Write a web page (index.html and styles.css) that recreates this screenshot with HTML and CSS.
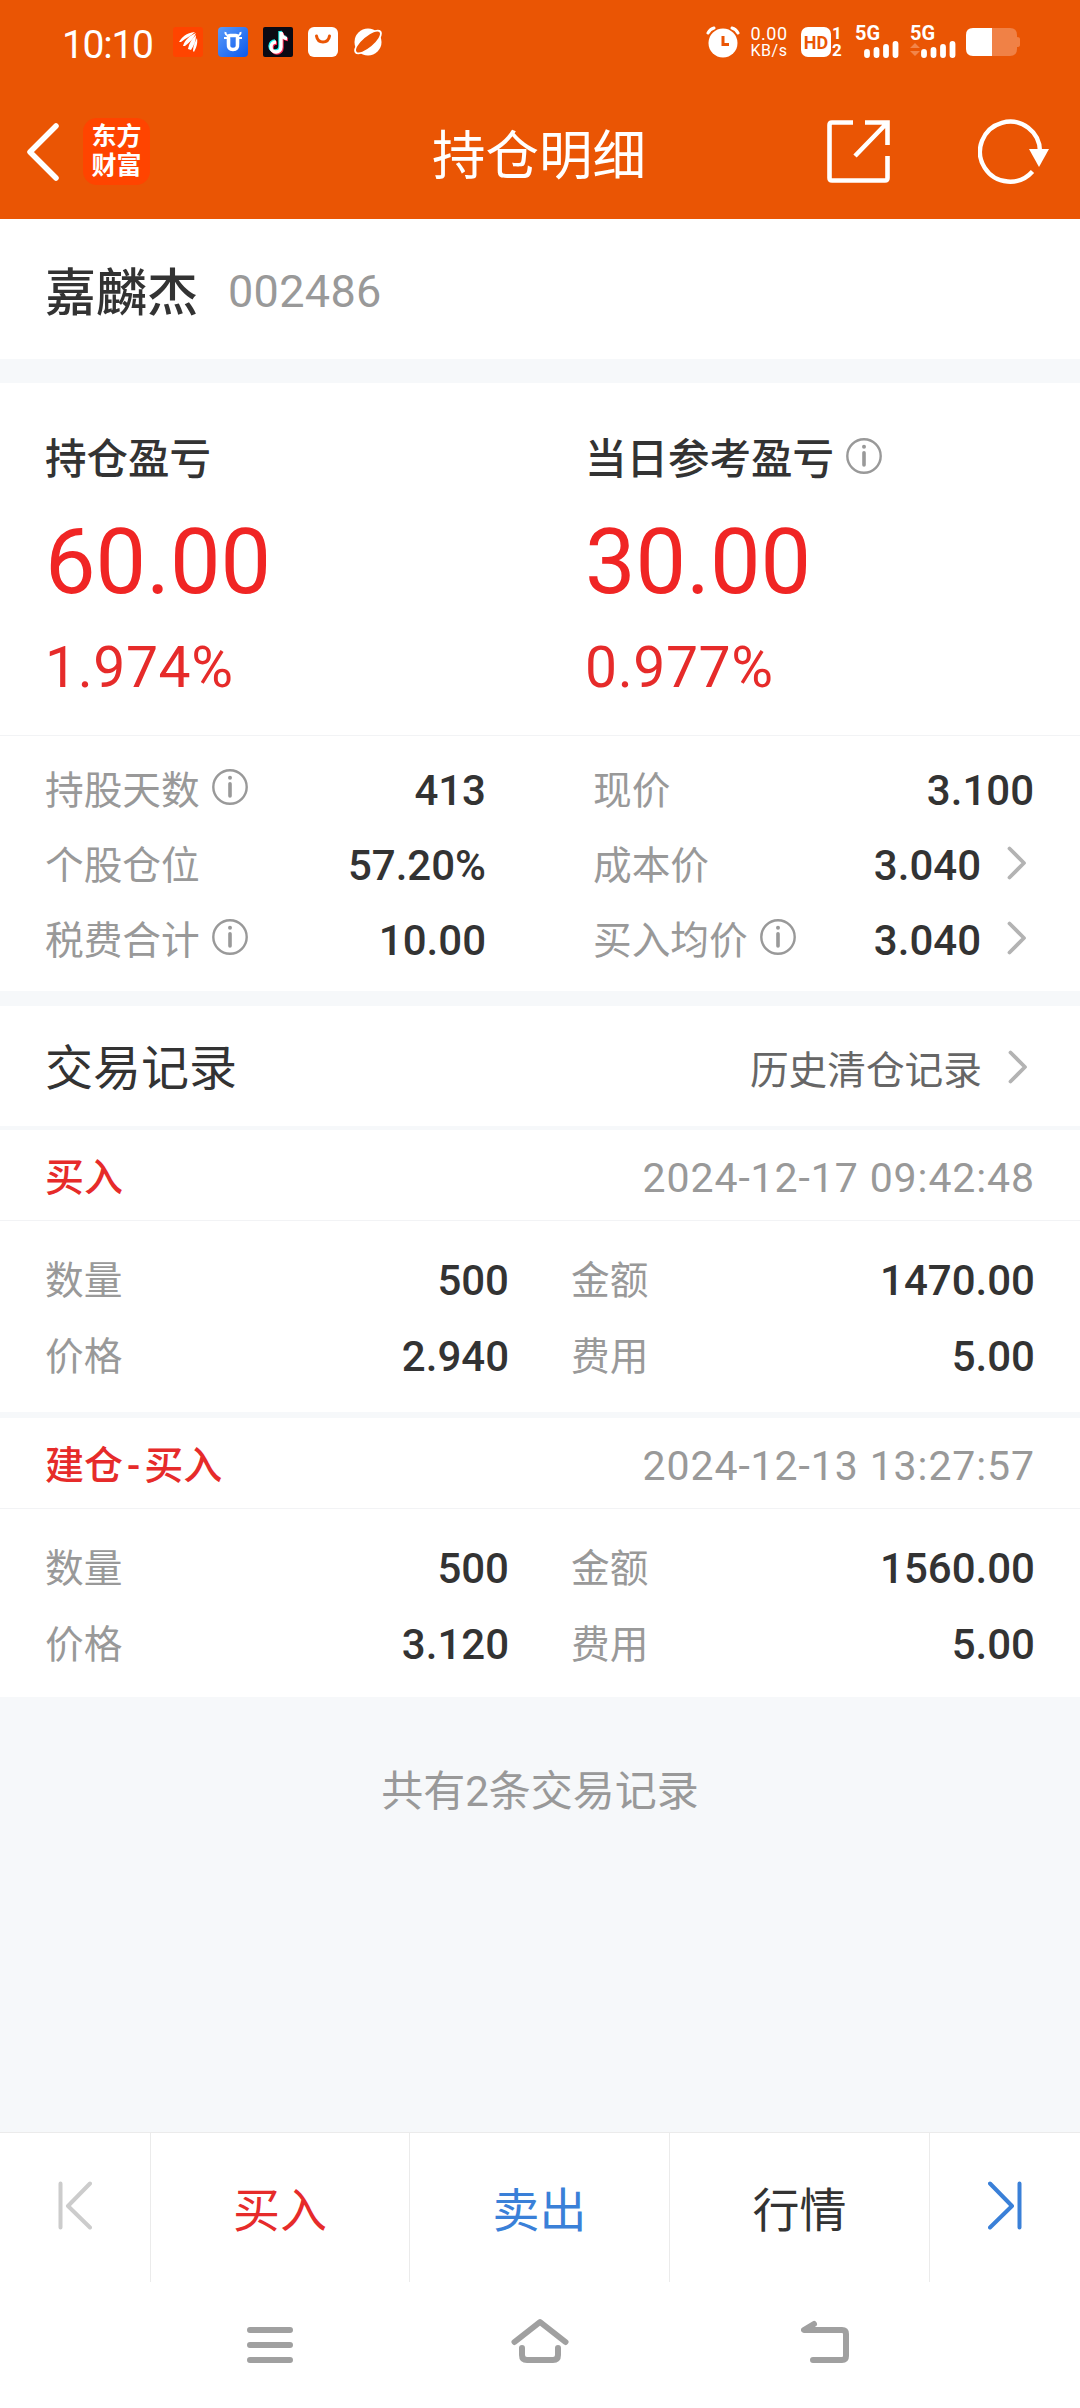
FILE: index.html
```html
<!DOCTYPE html>
<html lang="zh-CN">

<head>
    <title>持仓明细</title>
    <meta charset="utf-8">
    <meta name="viewport" content="width=device-width, initial-scale=1.0">
    <link rel="stylesheet" href="styles.css">
</head>

<body>
    <!-- shared icons -->
    <svg class="sprite">
        <symbol id="info" viewBox="0 0 36 36">
            <circle cx="18" cy="18" r="16.7" fill="none" stroke="#999" stroke-width="2.4" />
            <circle cx="18" cy="8.8" r="2" fill="#999" />
            <path d="M18 14.8V27" stroke="#999" stroke-width="3.6" stroke-linecap="round" />
        </symbol>
        <symbol id="arrow" viewBox="0 0 20 34">
            <path d="M2.5 2.5L17 17L2.5 31.5" fill="none" stroke="#b3b3b3" stroke-width="3.8" stroke-linecap="round" stroke-linejoin="round" />
        </symbol>
    </svg>

    <header>
        <div class="status">
            <span class="clock">10:10</span>
            <div class="apps">
                <svg width="30" height="30" viewBox="0 0 30 30">
                    <rect width="30" height="30" rx="3" fill="#ff4400" />
                    <path d="M6 15C9 10 13 6 22 5C18 9 13 11 8 15ZM10 19C12 13 16 9 23 6C21 11 17 15 12 19ZM15 22C16 16 19 12 23 8C23 14 21 18 18 23ZM20 24C20 19 22 15 24 11C25 17 23 21 21 25Z" fill="#fff" />
                </svg>
                <svg width="30" height="30" viewBox="0 0 30 30">
                    <defs>
                        <linearGradient id="blue" x1="0" y1="0" x2="1" y2="1">
                            <stop offset="0" stop-color="#5a9bf9" />
                            <stop offset="1" stop-color="#0a58ee" />
                        </linearGradient>
                    </defs>
                    <rect width="30" height="30" rx="4" fill="url(#blue)" />
                    <path d="M12 8.500H18Q20 8.500 19.500 12V17Q20 22.500 15 22.500T10.500 17V12Q10 8.500 12 8.500Z" fill="none" stroke="#fff" stroke-width="3.600" />
                    <path d="M7.500 5Q7 8 11 9M22.500 5Q23 8 19 9M6 11H10M20 11H24" fill="none" stroke="#fff" stroke-width="2" />
                </svg>
                <svg width="30" height="30" viewBox="0 0 30 30">
                    <rect width="30" height="30" rx="2" fill="#0b0a14" />
                    <g fill="none" stroke-width="3.4">
                        <path d="M17 4V19A5 5 0 1 1 12 14M17 4Q18 10 23 10.500" stroke="#25f4ee" />
                        <path d="M19 6V21A5 5 0 1 1 14 16M19 6Q20 12 25 12.500" stroke="#fe2c55" />
                        <path d="M18 5V20A5 5 0 1 1 13 15M18 5Q19 11 24 11.500" stroke="#fff" />
                    </g>
                </svg>
                <svg width="30" height="30" viewBox="0 0 30 30">
                    <rect width="30" height="30" rx="6" fill="#fff" />
                    <path d="M8.500 9Q9.500 15 15 15T21.500 9" fill="none" stroke="#ea5504" stroke-width="3" stroke-linecap="round" />
                </svg>
                <svg width="30" height="30" viewBox="0 0 30 30">
                    <circle cx="15" cy="15" r="13.5" fill="#fff" />
                    <ellipse cx="15" cy="15" rx="17" ry="7" transform="rotate(-40 15 15)" fill="#fff" />
                    <ellipse cx="15" cy="15" rx="15" ry="5.3" transform="rotate(-40 15 15)" fill="#ea5504" />
                </svg>
            </div>
            <div class="signals">
                <svg width="34" height="32" viewBox="0 0 34 32">
                    <circle cx="17" cy="17" r="14.5" fill="#fff" />
                    <path d="M2 7Q4 3 8 2M32 7Q30 3 26 2" fill="none" stroke="#fff" stroke-width="3" stroke-linecap="round" />
                    <path d="M17 10V18.500H23" fill="none" stroke="#ea5504" stroke-width="3" />
                </svg>
                <div class="speed"><span>0.00</span><span>KB/s</span></div>
                <div class="hd"><b>HD</b></div>
                <div class="sims"><span>1</span><span>2</span></div>
                <div class="net">
                    <b>5G</b>
                    <svg width="35" height="17" viewBox="0 0 35 17">
                        <path d="M3 11V14M12.500 9V14M22 6V14M31.500 3V14" stroke="#fff" stroke-width="5.800" stroke-linecap="round" />
                    </svg>
                </div>
                <div class="net second">
                    <b>5G</b>
                    <svg width="46" height="17" viewBox="0 0 46 17">
                        <path d="M0 7L5 2L10 7ZM0 10L5 15L10 10Z" fill="#f2854a" />
                        <path d="M14 11V14M23.500 9V14M33 6V14M42.500 3V14" stroke="#fff" stroke-width="5.800" stroke-linecap="round" />
                    </svg>
                </div>
                <svg class="battery" width="54" height="28" viewBox="0 0 54 28">
                    <path d="M26 0H44Q51 0 51 7V9Q54 9 54 11V17Q54 19 51 19V21Q51 28 44 28H26Z" fill="#f08146" />
                    <path d="M26 0H7Q0 0 0 7V21Q0 28 7 28H26Z" fill="#fff" />
                </svg>
            </div>
        </div>
        <div class="titlebar">
            <svg class="back" width="34" height="58" viewBox="0 0 34 58">
                <path d="M30 3L4 29L30 55" fill="none" stroke="#fff" stroke-width="5.5" stroke-linecap="round" stroke-linejoin="round" />
            </svg>
            <div class="logo">东方<br>财富</div>
            <h1>持仓明细</h1>
            <svg class="share" width="64" height="64" viewBox="0 0 64 64">
                <path d="M26 2.500H5Q2.500 2.500 2.500 5V58Q2.500 60.500 5 60.500H58Q60.500 60.500 60.500 58V36M38 2.500H60.500V25M60 3L28 36" fill="none" stroke="#fff" stroke-width="4.600" />
            </svg>
            <svg class="refresh" width="72" height="66" viewBox="0 0 72 66">
                <path d="M54.500 52.500A30 30 0 1 1 62 33" fill="none" stroke="#fff" stroke-width="4.400" />
                <path d="M51 30H71L61 48Z" fill="#fff" />
            </svg>
        </div>
    </header>

    <section class="stock">
        <h2>嘉麟杰</h2>
        <span>002486</span>
    </section>

    <section class="profit">
        <div>
            <h3>持仓盈亏</h3>
            <p class="amount">60.00</p>
            <p class="percent">1.974%</p>
        </div>
        <div>
            <h3>当日参考盈亏<svg class="info"><use href="#info" /></svg></h3>
            <p class="amount">30.00</p>
            <p class="percent">0.977%</p>
        </div>
    </section>

    <section class="details">
        <div class="row"><span>持股天数<svg class="info"><use href="#info" /></svg></span><b>413</b></div>
        <div class="row"><span>现价</span><b>3.100</b></div>
        <div class="row"><span>个股仓位</span><b>57.20%</b></div>
        <div class="row"><span>成本价</span><b>3.040<svg class="arrow"><use href="#arrow" /></svg></b></div>
        <div class="row"><span>税费合计<svg class="info"><use href="#info" /></svg></span><b>10.00</b></div>
        <div class="row"><span>买入均价<svg class="info"><use href="#info" /></svg></span><b>3.040<svg class="arrow"><use href="#arrow" /></svg></b></div>
    </section>

    <section class="records">
        <h2>交易记录</h2>
        <a>历史清仓记录<svg class="arrow"><use href="#arrow" /></svg></a>
    </section>

    <article>
        <div class="head"><h4>买入</h4><time>2024-12-17 09:42:48</time></div>
        <div class="trade">
            <div class="row"><span>数量</span><b>500</b></div>
            <div class="row"><span>金额</span><b>1470.00</b></div>
            <div class="row"><span>价格</span><b>2.940</b></div>
            <div class="row"><span>费用</span><b>5.00</b></div>
        </div>
    </article>

    <article>
        <div class="head"><h4>建仓<i>-</i>买入</h4><time>2024-12-13 13:27:57</time></div>
        <div class="trade">
            <div class="row"><span>数量</span><b>500</b></div>
            <div class="row"><span>金额</span><b>1560.00</b></div>
            <div class="row"><span>价格</span><b>3.120</b></div>
            <div class="row"><span>费用</span><b>5.00</b></div>
        </div>
    </article>

    <p class="total">共有2条交易记录</p>

    <footer>
        <div class="actions">
            <a><svg width="34" height="50" viewBox="0 0 34 50">
                <path d="M2.500 2.500V46.500M32 2.500L10 25L32 46.500" fill="none" stroke="#ccc" stroke-width="4" stroke-linecap="round" stroke-linejoin="round" />
            </svg></a>
            <a class="buy">买入</a>
            <a class="sell">卖出</a>
            <a>行情</a>
            <a><svg width="34" height="50" viewBox="0 0 34 50">
                <path d="M31.500 2.500V46.500M2 2.500L24 25L2 46.500" fill="none" stroke="#3a80d8" stroke-width="4" stroke-linecap="round" stroke-linejoin="round" />
            </svg></a>
        </div>
        <nav>
            <svg width="46" height="46" viewBox="0 0 46 46">
                <path d="M3 12H43M3 27H43M3 42H43" stroke="#a0a0a0" stroke-width="6" stroke-linecap="round" />
            </svg>
            <svg class="home" width="58" height="46" viewBox="0 0 58 46">
                <path d="M3.500 24L29 4L54.500 24M11 30V37Q11 42 16 42H42Q47 42 47 37V30" fill="none" stroke="#a0a0a0" stroke-width="6" stroke-linecap="round" stroke-linejoin="round" />
            </svg>
            <svg width="48" height="46" viewBox="0 0 48 46">
                <path d="M13 6L3 12H41Q45 12 45 16V38Q45 42 41 42H12" fill="none" stroke="#a0a0a0" stroke-width="6" stroke-linecap="round" stroke-linejoin="round" />
            </svg>
        </nav>
    </footer>
</body>

</html>
```
FILE: styles.css
```css
* {
    box-sizing: border-box;
    margin: 0;
    padding: 0;
}

body {
    display: flex;
    flex-direction: column;
    height: 2408px;
    background-color: #f6f8fa;
    color: #333;
    font-family: Roboto, "Noto Sans CJK SC", sans-serif;
}

svg {
    display: block;
    flex-shrink: 0;
}

.sprite {
    display: none;
}

header {
    height: 219px;
    background-color: #ea5504;
    color: white;
}

.status {
    display: flex;
    align-items: center;
    height: 84px;
    padding: 0 60px 0 62px;
}

.clock {
    width: 111px;
    font-size: 39px;
    letter-spacing: -1.3px;
    line-height: 84px;
    padding-top: 5px;
}

.apps {
    display: flex;
    gap: 15px;
}

.signals {
    display: flex;
    align-items: center;
    margin-left: auto;
}

.speed {
    display: flex;
    flex-direction: column;
    align-items: center;
    margin-left: 9px;
    width: 40px;
    font-size: 18px;
    letter-spacing: 0.5px;
    line-height: 17px;
}

.speed span:last-child {
    font-size: 16px;
}

.hd {
    margin-left: 12px;
    width: 30px;
    height: 30px;
    border-radius: 7px;
    background-color: white;
    color: #ea5504;
    font-size: 18px;
    line-height: 31px;
    text-align: center;
}

.sims {
    display: flex;
    flex-direction: column;
    width: 12px;
    font-size: 17px;
    font-weight: bold;
    line-height: 17px;
    text-align: center;
}

.net {
    display: flex;
    flex-direction: column;
    align-items: flex-end;
    margin-left: 12px;
    width: 44px;
    height: 32px;
}

.net.second {
    margin-left: 11px;
    width: 46px;
}

.net b {
    align-self: flex-start;
    font-size: 20px;
    line-height: 15px;
}

.battery {
    margin-left: 10px;
}

.titlebar {
    display: flex;
    align-items: center;
    height: 135px;
    padding: 0 30px 0 26px;
}

.logo {
    margin-left: 23px;
    width: 67px;
    height: 67px;
    padding-top: 4px;
    border-radius: 14px;
    background-color: #ff4400;
    font-size: 25px;
    font-weight: bold;
    line-height: 29px;
    text-align: center;
}

h1 {
    flex: 1;
    padding-left: 101px;
    font-size: 53.5px;
    font-weight: normal;
    text-align: center;
}

.share {
    margin-right: 87px;
}

.stock {
    display: flex;
    align-items: center;
    height: 140px;
    padding: 0 45px;
    background-color: white;
    margin-bottom: 24px;
}

.stock h2 {
    font-size: 51px;
    font-weight: 500;
}

.stock span {
    margin-left: 30px;
    padding-top: 4px;
    font-size: 45px;
    letter-spacing: 0.3px;
    color: #999;
}

.profit {
    display: grid;
    grid-template-columns: 540px 1fr;
    height: 353px;
    padding: 47px 45px 0;
    border-bottom: 1px solid #f2f3f5;
    background-color: white;
}

h3 {
    display: flex;
    align-items: center;
    font-size: 41.5px;
    font-weight: 500;
    line-height: 60px;
}

.info {
    width: 36px;
    height: 36px;
    margin-left: 12px;
}

h3 .info {
    margin-bottom: 8px;
}

.amount {
    color: #f02524;
    font-size: 90px;
    line-height: 106px;
    padding-top: 20px;
}

.percent {
    color: #e62b2a;
    font-size: 57px;
    letter-spacing: 0.6px;
    line-height: 70px;
    padding-top: 17px;
}

.details {
    display: grid;
    grid-template-columns: 441px 441px;
    column-gap: 107px;
    grid-auto-rows: 75px;
    height: 255px;
    padding: 17px 45px 0;
    background-color: white;
    margin-bottom: 15px;
}

.row {
    display: flex;
    align-items: center;
    justify-content: space-between;
    font-size: 38.7px;
}

.row span {
    display: flex;
    align-items: center;
    padding-bottom: 7px;
    color: #999;
}

.row b {
    display: flex;
    align-items: center;
    font-size: 42px;
    font-weight: 500;
}

.arrow {
    width: 20px;
    height: 34px;
    margin-left: 26px;
    margin-right: 7px;
}

.row .arrow {
    margin-bottom: 5px;
}

.records {
    display: flex;
    align-items: center;
    justify-content: space-between;
    height: 120px;
    padding: 0 45px;
    background-color: white;
    margin-bottom: 4px;
}

.records h2 {
    font-size: 48px;
    font-weight: normal;
    padding-bottom: 4px;
}

.records a {
    display: flex;
    align-items: center;
    padding-top: 2px;
    font-size: 38.7px;
    color: #666;
}

article {
    background-color: white;
}

article + article {
    margin-top: 6px;
}

.head {
    display: flex;
    align-items: center;
    justify-content: space-between;
    height: 91px;
    padding: 0 45px;
    border-bottom: 1px solid #f2f3f5;
}

h4 {
    color: #e62b2a;
    font-size: 39px;
    font-weight: 500;
    padding-bottom: 2px;
}

h4 i {
    font-style: normal;
    padding: 0 4px;
}

time {
    color: #999;
    font-size: 41px;
    letter-spacing: 0.9px;
    padding-top: 5px;
}

.trade {
    display: grid;
    grid-template-columns: 464px 464px;
    column-gap: 62px;
    grid-auto-rows: 76px;
    height: 191px;
    padding: 21px 45px 0;
}

article + article .trade {
    height: 188px;
}

.total {
    margin-top: 65px;
    color: #999;
    font-size: 42px;
    line-height: 60px;
    text-align: center;
}

footer {
    margin-top: auto;
    background-color: white;
}

.actions {
    display: grid;
    grid-template-columns: 151px 259px 260px 260px 150px;
    height: 150px;
    border-top: 1px solid #ebebeb;
}

.actions a {
    display: flex;
    align-items: center;
    justify-content: center;
    padding-bottom: 3px;
    border-right: 1px solid #ebebeb;
    font-size: 47px;
}

.actions a:last-child {
    border-right: none;
}

.buy {
    color: #e62b2a;
}

.sell {
    color: #3a80d8;
}

nav {
    display: flex;
    height: 126px;
    padding: 36px 0 0 247px;
}

.home {
    margin-left: 218px;
    margin-right: 232px;
}
```
